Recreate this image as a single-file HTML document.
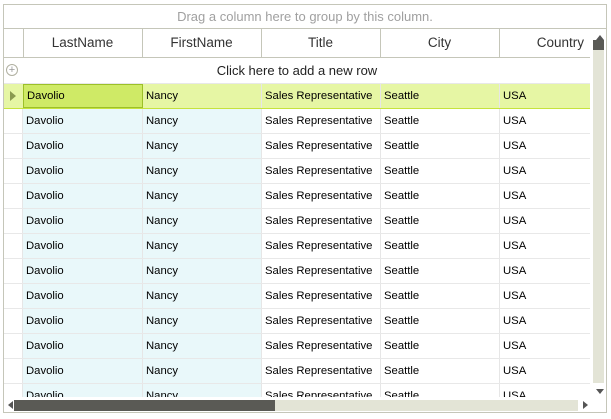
<!DOCTYPE html>
<html><head><style>
*{margin:0;padding:0;box-sizing:border-box}
body{width:611px;height:419px;background:#fff;font-family:"Liberation Sans",sans-serif;position:relative;overflow:hidden}
.abs{position:absolute}
.outer{left:3px;top:4px;width:604px;height:409px;border:1px solid #c5c6b9}
.grp{left:4px;top:5px;width:602px;height:24px;border-bottom:1px solid #c5c6b9;text-align:center;color:#a0a0a0;font-size:13px;line-height:23px}
.hdr{top:29px;height:29px;border-bottom:1px solid #c5c6b9;border-right:1px solid #c5c6b9;font-size:13.5px;color:#333;text-align:center;line-height:28px}
.rows{left:4px;top:58px;width:586px;height:339px;overflow:hidden}
.row{position:absolute;left:0;width:586px;height:25px;border-bottom:1px solid #e8e8e8}
.c{position:absolute;top:0;height:24px;line-height:24px;font-size:11.3px;color:#000;padding-left:3px;border-right:1px solid #e6e6e6;white-space:nowrap;overflow:hidden}
.c0{left:0;width:19px}
.c1{left:19px;width:120px;background:#e9f8fa}
.c2{left:139px;width:119px;background:#e9f8fa}
.c3{left:258px;width:119px}
.c4{left:377px;width:119px}
.c5{left:496px;width:90px;border-right:none}
</style></head><body>
<div class="abs outer"></div>
<div class="abs grp">Drag a column here to group by this column.</div>
<div class="abs hdr" style="left:4px;width:20px"></div>
<div class="abs hdr" style="left:23px;width:120px">LastName</div>
<div class="abs hdr" style="left:142px;width:120px">FirstName</div>
<div class="abs hdr" style="left:261px;width:120px">Title</div>
<div class="abs hdr" style="left:380px;width:120px">City</div>
<div class="abs hdr" style="left:499px;width:91px;border-right:none;text-align:right;padding-right:6px">Country</div>
<div class="rows abs">
<div class="row" style="top:0;height:26px">
 <div class="abs" style="left:2px;top:6px;width:12px;height:12px;border:1px solid #b0b0a0;border-radius:50%;color:#999;font-size:11px;line-height:10px;text-align:center">+</div>
 <div class="abs" style="left:0;width:586px;top:0;text-align:center;font-size:13px;line-height:26px;color:#222">Click here to add a new row</div>
</div>
<div class="row" style="top:26px;background:#e6f6a4;border-bottom:1px solid #c6e33c">
 <div class="c c0" style="border-right:none"><span style="position:absolute;left:6px;top:7px;border-top:5px solid transparent;border-bottom:5px solid transparent;border-left:6px solid #8a9a50"></span></div>
 <div class="c c1" style="background:#cfea66;border:1px solid #9cc028;line-height:22px">Davolio</div>
 <div class="c c2" style="background:transparent">Nancy</div>
 <div class="c c3">Sales Representative</div><div class="c c4">Seattle</div><div class="c c5">USA</div>
</div>
<div class="row" style="top:51px"><div class="c c0"></div><div class="c c1">Davolio</div><div class="c c2">Nancy</div><div class="c c3">Sales Representative</div><div class="c c4">Seattle</div><div class="c c5">USA</div></div>
<div class="row" style="top:76px"><div class="c c0"></div><div class="c c1">Davolio</div><div class="c c2">Nancy</div><div class="c c3">Sales Representative</div><div class="c c4">Seattle</div><div class="c c5">USA</div></div>
<div class="row" style="top:101px"><div class="c c0"></div><div class="c c1">Davolio</div><div class="c c2">Nancy</div><div class="c c3">Sales Representative</div><div class="c c4">Seattle</div><div class="c c5">USA</div></div>
<div class="row" style="top:126px"><div class="c c0"></div><div class="c c1">Davolio</div><div class="c c2">Nancy</div><div class="c c3">Sales Representative</div><div class="c c4">Seattle</div><div class="c c5">USA</div></div>
<div class="row" style="top:151px"><div class="c c0"></div><div class="c c1">Davolio</div><div class="c c2">Nancy</div><div class="c c3">Sales Representative</div><div class="c c4">Seattle</div><div class="c c5">USA</div></div>
<div class="row" style="top:176px"><div class="c c0"></div><div class="c c1">Davolio</div><div class="c c2">Nancy</div><div class="c c3">Sales Representative</div><div class="c c4">Seattle</div><div class="c c5">USA</div></div>
<div class="row" style="top:201px"><div class="c c0"></div><div class="c c1">Davolio</div><div class="c c2">Nancy</div><div class="c c3">Sales Representative</div><div class="c c4">Seattle</div><div class="c c5">USA</div></div>
<div class="row" style="top:226px"><div class="c c0"></div><div class="c c1">Davolio</div><div class="c c2">Nancy</div><div class="c c3">Sales Representative</div><div class="c c4">Seattle</div><div class="c c5">USA</div></div>
<div class="row" style="top:251px"><div class="c c0"></div><div class="c c1">Davolio</div><div class="c c2">Nancy</div><div class="c c3">Sales Representative</div><div class="c c4">Seattle</div><div class="c c5">USA</div></div>
<div class="row" style="top:276px"><div class="c c0"></div><div class="c c1">Davolio</div><div class="c c2">Nancy</div><div class="c c3">Sales Representative</div><div class="c c4">Seattle</div><div class="c c5">USA</div></div>
<div class="row" style="top:301px"><div class="c c0"></div><div class="c c1">Davolio</div><div class="c c2">Nancy</div><div class="c c3">Sales Representative</div><div class="c c4">Seattle</div><div class="c c5">USA</div></div>
<div class="row" style="top:326px"><div class="c c0"></div><div class="c c1">Davolio</div><div class="c c2">Nancy</div><div class="c c3">Sales Representative</div><div class="c c4">Seattle</div><div class="c c5">USA</div></div>
</div>
<div class="abs" style="left:596px;top:35px;width:0;height:0;border-left:4px solid transparent;border-right:4px solid transparent;border-bottom:5px solid #555"></div>
<div class="abs" style="left:593px;top:40px;width:11px;height:343px;background:#e3e4d6"></div>
<div class="abs" style="left:593px;top:40px;width:11px;height:10px;background:#5a5a55"></div>
<div class="abs" style="left:596px;top:389px;width:0;height:0;border-left:4px solid transparent;border-right:4px solid transparent;border-top:5px solid #555"></div>
<div class="abs" style="left:8px;top:401px;width:0;height:0;border-top:4px solid transparent;border-bottom:4px solid transparent;border-right:5px solid #555"></div>
<div class="abs" style="left:14px;top:400px;width:564px;height:11px;background:#e3e4d6"></div>
<div class="abs" style="left:14px;top:400px;width:261px;height:11px;background:#5a5a55"></div>
<div class="abs" style="left:583px;top:401px;width:0;height:0;border-top:4px solid transparent;border-bottom:4px solid transparent;border-left:5px solid #555"></div>
</body></html>
